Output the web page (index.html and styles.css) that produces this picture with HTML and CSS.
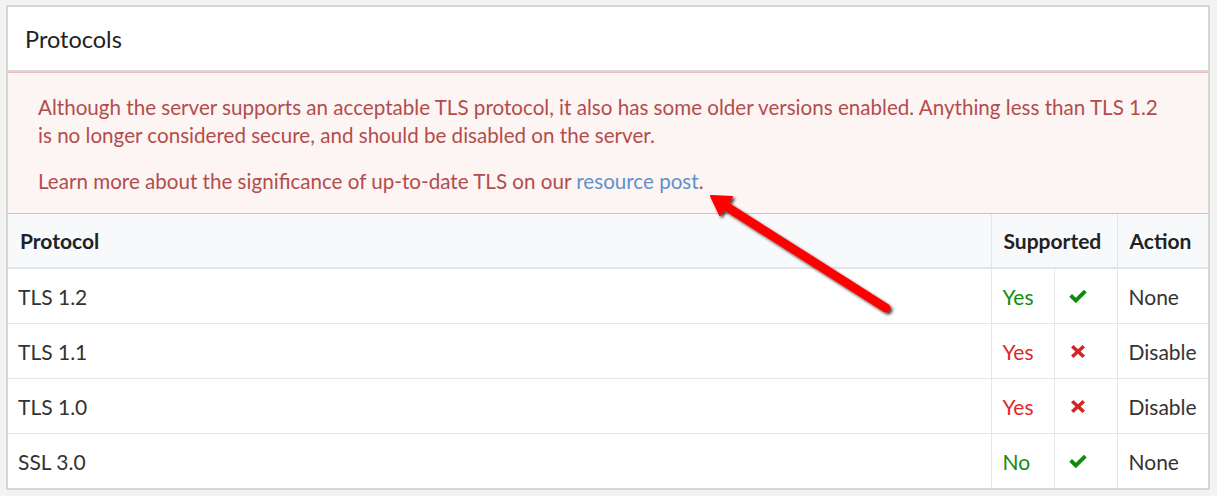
FILE: index.html
```html
<!DOCTYPE html>
<html>
<head>
<meta charset="utf-8">
<link rel="stylesheet" href="styles.css">
</head>
<body>
<div class="card">
  <div class="card-header">Protocols</div>
  <div class="alert">
    <p>Although the server supports an acceptable TLS protocol, it also has some older versions enabled. Anything less than TLS 1.2 is no longer considered secure, and should be disabled on the server.</p>
    <p>Learn more about the significance of up-to-date TLS on our <a href="#">resource post</a>.</p>
  </div>
  <table class="grid">
    <colgroup>
      <col class="c-proto"><col class="c-val"><col class="c-icon"><col class="c-act">
    </colgroup>
    <thead>
      <tr><th>Protocol</th><th colspan="2">Supported</th><th>Action</th></tr>
    </thead>
    <tbody>
      <tr><td>TLS 1.2</td><td class="ok">Yes</td><td class="ic"><svg class="chk" viewBox="0 0 18 13"><path d="M0.3 6.8 L3 4 L6.8 7.7 L15 -0.3 L17.7 2.5 L6.8 13.2 Z" fill="#0e8a0e"/></svg></td><td>None</td></tr>
      <tr><td>TLS 1.1</td><td class="bad">Yes</td><td class="ic"><svg class="crs" viewBox="0 0 14 13"><path d="M2.5 0 L7 4.2 L11.5 0 L14 2.5 L9.6 6.5 L14 10.5 L11.5 13 L7 8.8 L2.5 13 L0 10.5 L4.4 6.5 L0 2.5 Z" fill="#d42424"/></svg></td><td>Disable</td></tr>
      <tr><td>TLS 1.0</td><td class="bad">Yes</td><td class="ic"><svg class="crs" viewBox="0 0 14 13"><path d="M2.5 0 L7 4.2 L11.5 0 L14 2.5 L9.6 6.5 L14 10.5 L11.5 13 L7 8.8 L2.5 13 L0 10.5 L4.4 6.5 L0 2.5 Z" fill="#d42424"/></svg></td><td>Disable</td></tr>
      <tr><td>SSL 3.0</td><td class="ok">No</td><td class="ic"><svg class="chk" viewBox="0 0 18 13"><path d="M0.3 6.8 L3 4 L6.8 7.7 L15 -0.3 L17.7 2.5 L6.8 13.2 Z" fill="#0e8a0e"/></svg></td><td>None</td></tr>
    </tbody>
  </table>
</div>
<svg class="arrow" width="1217" height="496" viewBox="0 0 1217 496">
  <defs>
    <filter id="sh" x="-20%" y="-20%" width="140%" height="140%">
      <feGaussianBlur in="SourceAlpha" stdDeviation="1.6"/>
      <feOffset dx="2" dy="2" result="b"/>
      <feComponentTransfer><feFuncA type="linear" slope="0.75"/></feComponentTransfer>
      <feMerge><feMergeNode/><feMergeNode in="SourceGraphic"/></feMerge>
    </filter>
  </defs>
  <g filter="url(#sh)">
    <line x1="724" y1="205" x2="886" y2="308" stroke="#ff0000" stroke-width="9" stroke-linecap="round"/>
    <polygon points="711,196 732,197 720,215" fill="#ff0000" stroke="#ff0000" stroke-width="2" stroke-linejoin="round"/>
  </g>
</svg>
</body>
</html>
```

FILE: styles.css
```css
html, body {
  margin: 0;
  padding: 0;
  background: #f3f3f3;
  font-family: Lato, "Open Sans", sans-serif;
  color: #333;
}
.card {
  margin: 5px 0 0 6px;
  width: 1200px;
  border: 2px solid #d6d6d6;
  background: #fff;
}
.card-header {
  height: 63px;
  line-height: 64px;
  padding-left: 17px;
  font-size: 23.5px;
  color: #222;
  border-bottom: 2px solid #d9d9d9;
}
.alert {
  background: #fdf4f4;
  border-top: 1px solid #ebbcbc;
  border-bottom: 1px solid #e9b9b9;
  padding: 20px 38px 18px 30px;
  color: #b34d4b;
  font-size: 20.6px;
  line-height: 28px;
}
.alert p {
  margin: 0;
}
.alert p + p {
  margin-top: 18px;
}
.alert a {
  color: #5e92cc;
  text-decoration: none;
}
.grid {
  width: 100%;
  border-collapse: collapse;
  table-layout: fixed;
  font-size: 21px;
}
.c-proto { width: 983px; }
.c-val { width: 63px; }
.c-icon { width: 63px; }
.c-act { width: 91px; }
.grid th {
  background: #f8f9fb;
  color: #222;
  font-weight: bold;
  text-align: left;
  height: 53px;
  padding: 0 12px;
  border-bottom: 2px solid #e2e4e7;
  border-left: 1px solid #e6e6e6;
}
.grid td {
  height: 54px;
  padding: 0 11px;
  border-top: 1px solid #e6e6e6;
  border-left: 1px solid #e6e6e6;
  white-space: nowrap;
}
.grid th:first-child, .grid td:first-child {
  border-left: none;
}
.grid th:first-child { padding-left: 12px; }
.grid td:first-child { padding-left: 10px; }
.grid tbody tr:first-child td { border-top: none; }
.grid td.ok { color: #128c12; }
.grid td.bad { color: #e02828; }
.grid td.ic { padding: 0 0 0 14px; }
.chk { width: 18px; height: 13px; display: block; }
.crs { width: 14px; height: 13px; display: block; margin-left: 2px; }
.arrow {
  position: absolute;
  left: 0;
  top: 0;
  pointer-events: none;
}
```
